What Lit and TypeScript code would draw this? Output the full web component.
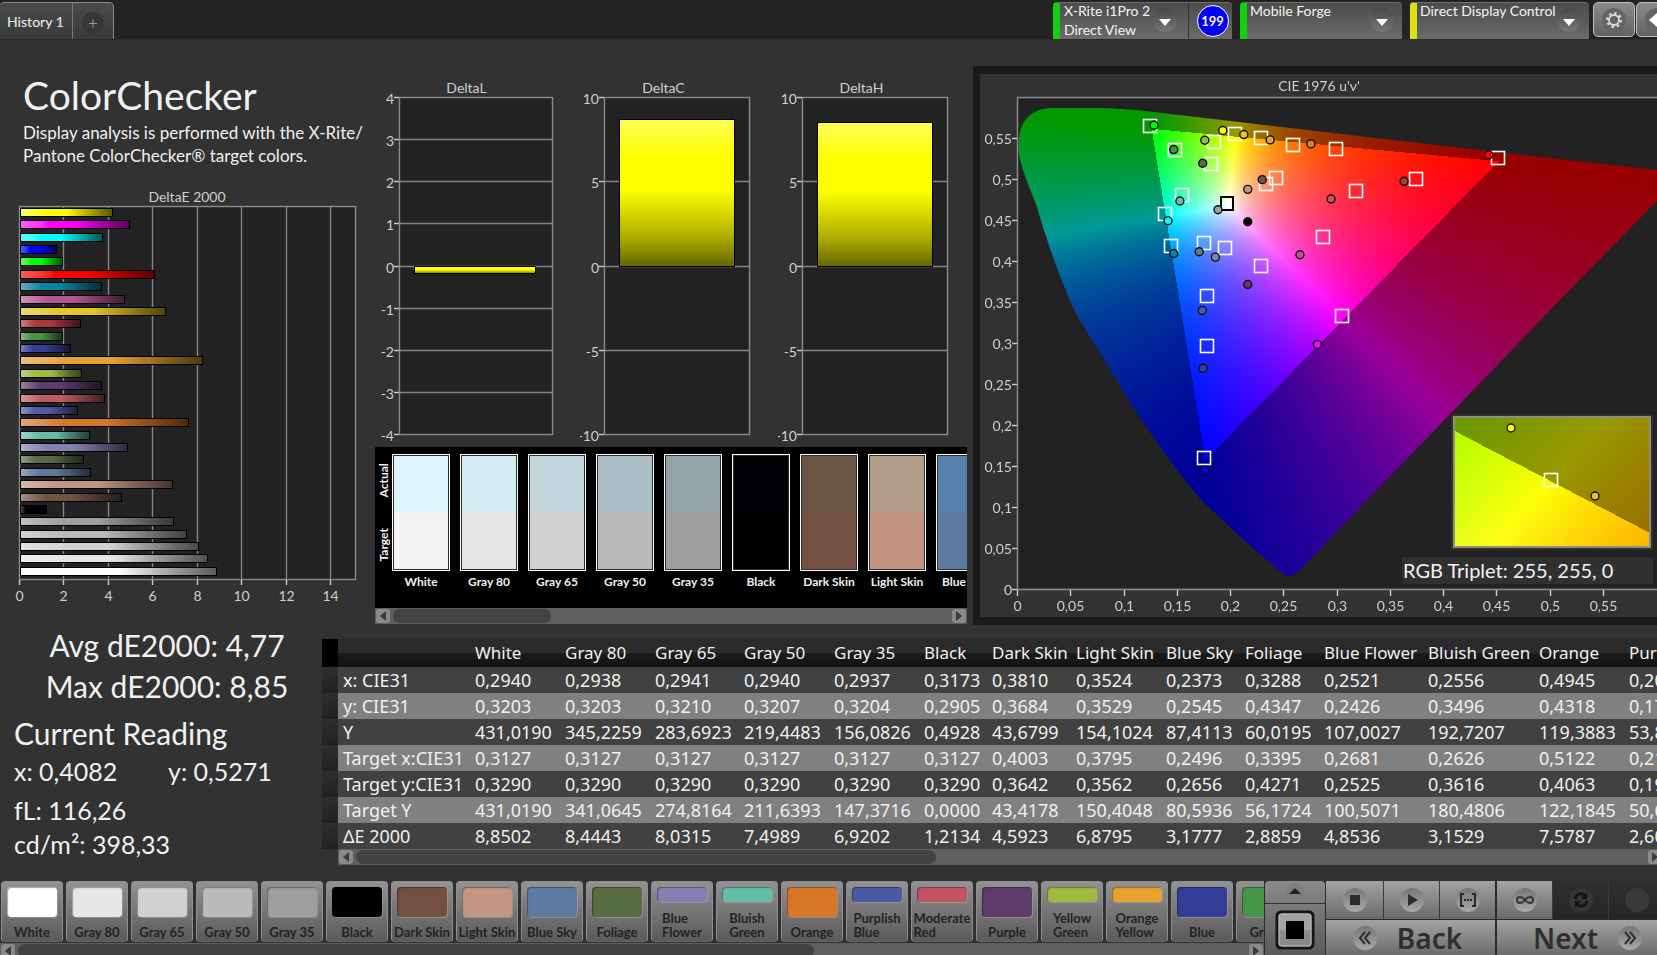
import { LitElement, html, svg, css, nothing } from "lit";
import { customElement, property } from "lit/decorators.js";
import { styleMap } from "lit/directives/style-map.js";
import { classMap } from "lit/directives/class-map.js";

const deltaE: Array<[string, number]> = [
  ["#ffff00", 4.16], ["#ff00ff", 4.93], ["#00ffff", 3.75], ["#0000ff", 1.66], ["#00ff00", 1.92],
  ["#ff0000", 6.06], ["#0885a1", 3.68], ["#bb5695", 4.71], ["#e7c71f", 6.55], ["#af363c", 2.74],
  ["#469449", 1.93], ["#383d96", 2.29], ["#e6a22e", 8.22], ["#9dbc40", 2.78], ["#5e3c6c", 3.68],
  ["#c15a63", 3.82], ["#505ba6", 2.6], ["#d97729", 7.58], ["#67bdaa", 3.15], ["#8580b1", 4.85],
  ["#576c43", 2.89], ["#627a9d", 3.18], ["#c29682", 6.88], ["#735244", 4.59], ["#000000", 1.21],
  ["#a0a0a0", 6.92], ["#bababa", 7.5], ["#d2d2d2", 8.03], ["#e6e6e6", 8.44], ["#ffffff", 8.85],
];

const pairs: Array<[string, string, string]> = [
  ["White", "#dcf5ff", "#f3f3f3"], ["Gray 80", "#d3ebf2", "#e6e6e6"], ["Gray 65", "#c3d6de", "#d1d1d1"],
  ["Gray 50", "#acbfc6", "#bababa"], ["Gray 35", "#95a4aa", "#9e9e9e"], ["Black", "#030206", "#000000"],
  ["Dark Skin", "#6a5444", "#73503f"], ["Light Skin", "#b29d8b", "#c29480"], ["Blue Sky", "#5880ab", "#5d7a9f"],
];

const patches: Array<[string, string, boolean?]> = [
  ["White", "#ffffff"], ["Gray 80", "#e6e6e6"], ["Gray 65", "#d1d1d1"], ["Gray 50", "#bababa"],
  ["Gray 35", "#9e9e9e"], ["Black", "#000000"], ["Dark Skin", "#735040"], ["Light Skin", "#c29682"],
  ["Blue Sky", "#5d7b9f"], ["Foliage", "#586c42"], ["Blue Flower", "#8480b1", true],
  ["Bluish Green", "#65bda8", true], ["Orange", "#d97729"], ["Purplish Blue", "#4a5ba6", true],
  ["Moderate Red", "#c35262", true], ["Purple", "#5d3c6b"], ["Yellow Green", "#9ebb3f", true],
  ["Orange Yellow", "#e6a22f", true], ["Blue", "#333d97"], ["Green", "#469549"],
];

const tableHead = ["White", "Gray 80", "Gray 65", "Gray 50", "Gray 35", "Black", "Dark Skin", "Light Skin",
  "Blue Sky", "Foliage", "Blue Flower", "Bluish Green", "Orange", "Purplish Blue"];
const colWidths = [90, 90, 89, 90, 90, 68, 84, 90, 79, 79, 104, 111, 90, 120];
const tableRows: Array<[string, string[]]> = [
  ["x: CIE31", ["0,2940", "0,2938", "0,2941", "0,2940", "0,2937", "0,3173", "0,3810", "0,3524", "0,2373", "0,3288", "0,2521", "0,2556", "0,4945", "0,2013"]],
  ["y: CIE31", ["0,3203", "0,3203", "0,3210", "0,3207", "0,3204", "0,2905", "0,3684", "0,3529", "0,2545", "0,4347", "0,2426", "0,3496", "0,4318", "0,1752"]],
  ["Y", ["431,0190", "345,2259", "283,6923", "219,4483", "156,0826", "0,4928", "43,6799", "154,1024", "87,4113", "60,0195", "107,0027", "192,7207", "119,3883", "53,8124"]],
  ["Target x:CIE31", ["0,3127", "0,3127", "0,3127", "0,3127", "0,3127", "0,3127", "0,4003", "0,3795", "0,2496", "0,3395", "0,2681", "0,2626", "0,5122", "0,2118"]],
  ["Target y:CIE31", ["0,3290", "0,3290", "0,3290", "0,3290", "0,3290", "0,3290", "0,3642", "0,3562", "0,2656", "0,4271", "0,2525", "0,3616", "0,4063", "0,1903"]],
  ["Target Y", ["431,0190", "341,0645", "274,8164", "211,6393", "147,3716", "0,0000", "43,4178", "150,4048", "80,5936", "56,1724", "100,5071", "180,4806", "122,1845", "50,6210"]],
  ["ΔE 2000", ["8,8502", "8,4443", "8,0315", "7,4989", "6,9202", "1,2134", "4,5923", "6,8795", "3,1777", "2,8859", "4,8536", "3,1529", "7,5787", "2,6041"]],
];

/* Target chromaticities, u' v' */
const targets: Array<[number, number]> = [
  [0.1248, 0.5646], [0.1475, 0.5353], [0.1849, 0.545], [0.2038, 0.5548], [0.2289, 0.5499], [0.2589, 0.5414],
  [0.2992, 0.5365], [0.4506, 0.5247], [0.3745, 0.4998], [0.3173, 0.4852], [0.2429, 0.5011], [0.233, 0.4937],
  [0.182, 0.5182], [0.154, 0.4803], [0.1388, 0.4571], [0.1438, 0.418], [0.1754, 0.4217],
  [0.1948, 0.4156], [0.2281, 0.3936], [0.2869, 0.429], [0.1783, 0.3569], [0.305, 0.3325], [0.1783, 0.2958],
  [0.1754, 0.159],
];

/* Measured chromaticities, u' v' and patch colour */
const measured: Array<[number, number, string]> = [
  [0.1281, 0.5662, "#00ff00"], [0.1466, 0.5365, "#469449"], [0.1758, 0.5479, "#9dbc40"],
  [0.1927, 0.5597, "#ffff00"], [0.2124, 0.5548, "#e7c71f"], [0.2371, 0.5483, "#e6a22e"],
  [0.2754, 0.5434, "#d67e2c"], [0.4423, 0.53, "#ff0000"], [0.3629, 0.4978, "#af363c"],
  [0.2943, 0.4762, "#c15a63"], [0.2297, 0.4998, "#735244"], [0.2161, 0.488, "#c29682"],
  [0.1738, 0.5198, "#576c43"], [0.1524, 0.4738, "#67bdaa"], [0.1882, 0.4632, "#a0a0a0"],
  [0.2161, 0.4485, "#000000"], [0.1413, 0.4497, "#00ffff"], [0.1466, 0.4098, "#0885a1"],
  [0.1705, 0.4119, "#627a9d"], [0.1857, 0.4053, "#8580b1"], [0.2161, 0.372, "#5e3c6c"],
  [0.2651, 0.4082, "#bb5695"], [0.1734, 0.3402, "#505ba6"], [0.2815, 0.2987, "#ff00ff"],
  [0.1742, 0.2698, "#383d96"], [0.1758, 0.1456, "#0000ff"],
];

/* Normalised display colour of an xy chromaticity; dimmed outside the sRGB gamut */
function chromaColor(x: number, y: number): [number, number, number] {
  const X = x / y, Z = (1 - x - y) / y;
  const lin = [
    3.2406 * X - 1.5372 - 0.4986 * Z,
    -0.9689 * X + 1.8758 + 0.0415 * Z,
    0.0557 * X - 0.204 + 1.057 * Z,
  ];
  const inside = Math.min(...lin) >= 0;
  const max = Math.max(...lin);
  const k = inside ? 255 : 153;
  return lin.map((c) => (k * Math.max(c, 0)) / max) as [number, number, number];
}

function paint(w: number, h: number, at: (px: number, py: number) => [number, number]): HTMLCanvasElement {
  const c = document.createElement("canvas");
  c.width = w;
  c.height = h;
  const ctx = c.getContext("2d")!;
  const img = ctx.createImageData(w, h);
  for (let j = 0; j < h; j++) {
    for (let i = 0; i < w; i++) {
      const [x, y] = at(i, j);
      const [r, g, b] = y > 0 ? chromaColor(x, y) : [0, 0, 0];
      const o = (j * w + i) * 4;
      img.data[o] = r;
      img.data[o + 1] = g;
      img.data[o + 2] = b;
      img.data[o + 3] = 255;
    }
  }
  ctx.putImageData(img, 0, 0);
  return c;
}

const scrollStyles = css`
  .scroll {
    display: flex;
    align-items: stretch;
    height: 16px;
    gap: 3px;
    background: #5f5f5f;
    box-sizing: border-box;
    padding: 1px;
  }
  .scroll button {
    flex: none;
    width: 14px;
    padding: 0;
    border: 0;
    border-radius: 3px;
    background: #8a8a8a;
    display: grid;
    place-items: center;
  }
  .track { flex: 1; display: flex; }
  .thumb { border-radius: 7px; background: #434343; }
`;

const scrollbar = (percent: number) => html`
  <div class="scroll">
    <button aria-label="Scroll left"><svg width="6" height="10"><path d="M6 0V10L0 5Z" fill="#3a3a3a" /></svg></button>
    <div class="track"><div class="thumb" style=${styleMap({ width: percent + "%" })}></div></div>
    <button aria-label="Scroll right"><svg width="6" height="10"><path d="M0 0V10L6 5Z" fill="#3a3a3a" /></svg></button>
  </div>`;

const chartStyles = css`
  :host { display: block; }
  svg { display: block; }
  text { font: 14px Lato, sans-serif; fill: #cfcfcf; }
  .plot { fill: #222222; stroke: #8c8c8c; stroke-width: 1.4; }
  .grid { stroke: #858585; stroke-width: 1.4; }
  .tick { stroke: #cccccc; stroke-width: 1.4; }
  .mid { text-anchor: middle; }
  .end { text-anchor: end; }
`;

@customElement("delta-e-chart")
class DeltaEChart extends LitElement {
  static styles = chartStyles;
  render() {
    const unit = 22.25, x0 = 20, top = 21, pitch = 12.37;
    return html`<svg width="370" height="420" role="img" aria-label="DeltaE 2000">
      <defs>${deltaE.map(([c], i) => svg`<linearGradient id="g${i}">
        <stop offset="0" stop-color=${`color-mix(in srgb, ${c}, white 35%)`} />
        <stop offset="0.25" stop-color=${c} />
        <stop offset="0.5" stop-color=${c} />
        <stop offset="1" stop-color=${`color-mix(in srgb, ${c}, black 65%)`} />
      </linearGradient>`)}</defs>
      <text class="mid" x="187" y="16">DeltaE 2000</text>
      <rect class="plot" x=${x0 - 0.5} y=${top - 0.5} width="336" height="373" />
      ${[0, 2, 4, 6, 8, 10, 12, 14].map((v) => {
        const x = Math.floor(x0 + v * unit) - 0.5;
        return svg`${v ? svg`<line class="grid" x1=${x} x2=${x} y1="21" y2="393" />` : nothing}
          <line class="tick" x1=${x} x2=${x} y1="394" y2="399" />
          <text class="mid" x=${x} y="415">${v}</text>`;
      })}
      ${deltaE.map(([, v], i) => svg`<rect x=${x0 + 0.5} y=${Math.round(top + 2 + i * pitch) - 0.5} width=${Math.round(v * unit) - 1}
        height="8" fill="url(#g${i})" stroke="#000" />`)}
    </svg>`;
  }
}

@customElement("delta-chart")
class DeltaChart extends LitElement {
  static styles = chartStyles;
  @property() name = "";
  @property({ type: Number }) width = 200;
  @property({ type: Number }) left = 27;
  @property({ type: Number }) plot = 153;
  @property({ type: Number }) axis = 28;
  @property({ type: Number }) max = 4;
  @property({ type: Number }) step = 1;
  @property({ type: Number }) value = 0;
  render() {
    const top = 22.5, h = 337, zero = top + h / 2;
    const ticks: number[] = [];
    for (let v = this.max; v >= -this.max; v -= this.step) ticks.push(v);
    const yOf = (v: number) => Math.floor(zero - (v / this.max) * (h / 2)) + 0.5;
    const y = Math.min(yOf(this.value), yOf(0)), bh = Math.abs(yOf(this.value) - yOf(0));
    return html`<svg width=${this.width} height="372" role="img" aria-label=${this.name}>
      <defs><linearGradient id="bar" x2="0" y2="1">
        <stop offset="0" stop-color="#ffff58" /><stop offset="0.25" stop-color="#ffff00" />
        <stop offset="0.48" stop-color="#ffff00" /><stop offset="0.8" stop-color="#adad00" /><stop offset="1" stop-color="#646400" />
      </linearGradient></defs>
      <text class="mid" x=${this.left + (this.plot - this.axis) / 2} y="18">${this.name}</text>
      <rect class="plot" x=${this.left - 0.5} y=${top} width=${this.plot} height=${h} />
      ${ticks.map((v) => svg`
        ${Math.abs(v) < this.max ? svg`<line class="grid" x1=${this.left} x2=${this.left + this.plot - 1} y1=${yOf(v)} y2=${yOf(v)} />` : nothing}
        <line class="tick" x1=${this.left - 6} x2=${this.left - 1} y1=${yOf(v)} y2=${yOf(v)} />
        <text class="end" x=${this.left - 6} y=${yOf(v) + 6}>${v}</text>`)}
      <rect x=${Math.round(this.left + this.plot * 0.1) - 0.5} y=${y} width=${Math.round(this.plot * 0.79)} height=${bh} fill="url(#bar)" stroke="#000" />
    </svg>`;
  }
}

@customElement("cie-chart")
class CieChart extends LitElement {
  static styles = [chartStyles, css`
    :host {
      position: relative;
      box-sizing: border-box;
      height: 559px;
      border: 8px solid #1a1a1a;
      border-width: 8px 0 8px 7px;
      overflow: hidden;
      background: #323232;
    }
    .scene, .field { position: absolute; left: 0; top: 0; }
    .field { left: 38px; top: 24px; }
    .base { fill: #222222; }
    .target { fill: none; stroke: #fff; stroke-width: 1.6; }
    .white { stroke: #000; stroke-width: 2; }
    .dot { stroke: #111; stroke-width: 1.4; }
    .inset {
      position: absolute;
      right: 6px;
      top: 342px;
      width: 194px;
      height: 128px;
      border: 2px solid #8d8d80;
      outline: 2px solid #303030;
    }
    .inset svg { position: absolute; left: 0; top: 0; }
    .inset canvas { display: block; }
    .triplet {
      position: absolute;
      right: 4px;
      top: 483px;
      width: 251px;
      padding-left: 1px;
      box-sizing: border-box;
      background: #303030;
      color: #f2f2f2;
      font: 20px/27px Lato, sans-serif;
      white-space: nowrap;
    }
  `];

  firstUpdated() {
    const field = this.renderRoot.querySelector<HTMLCanvasElement>(".field")!;
    const ctx = field.getContext("2d")!;
    const locus = new Path2D(
      "M1 56 C-2 24 12 10 35 10 L83 10 Q110 11 127 13 L478 54 L639 72 L700 79 L639 103 L541 203 L280 474 Q271 482 263 474 Q240 455 215 432 L184 403 Q160 375 136 340 Q118 315 105 293 Q78 248 62 223 L52 203 Q32 155 18 106 Q3 70 1 56 Z"
    );
    ctx.clip(locus);
    const bitmap = paint(field.width, field.height, (i, j) => {
      const u = i / 1065.4, v = (491 - j) / 819;
      const d = 6 * u - 16 * v + 12;
      return [(9 * u) / d, (4 * v) / d];
    });
    ctx.drawImage(bitmap, 0, 0);
    const zoom = this.renderRoot.querySelector<HTMLCanvasElement>(".detail")!;
    const detail = paint(zoom.width, zoom.height, (i, j) => [0.4193 + (i - 96) / 3800, 0.5053 - (j - 63) / 2500]);
    zoom.getContext("2d")!.drawImage(detail, 0, 0);
  }

  render() {
    const px = (u: number) => 37.5 + u * 1065.4;
    const py = (v: number) => 515.5 - v * 820;
    const steps = Array.from({ length: 12 }, (_, i) => i);
    const label = (i: number) => String((i * 5) / 100).replace(".", ",");
    return html`
      <svg class="scene" width="2000" height="543">
        <rect class="base" x="38" y="24" width="1962" height="490" />
      </svg>
      <canvas class="field" width="700" height="490"></canvas>
      <svg class="scene" width="2000" height="543" role="img" aria-label="CIE 1976 u'v' chromaticity diagram">
        <path d="M2000 23.500H37.500V515.500H2000" fill="none" stroke="#8a8a8a" stroke-width="1.5" />
        <text class="mid" x="339" y="17">CIE 1976 u'v'</text>
        ${steps.map((i) => {
          const x = Math.floor(px(i * 0.05)) + 0.5, y = Math.floor(py(i * 0.05)) + 0.5;
          return svg`<line class="tick" x1=${x} x2=${x} y1="516" y2="522" /><text class="mid" x=${x} y="537">${label(i)}</text>
            <line class="tick" x1="32" x2="37" y1=${y} y2=${y} /><text class="end" x="32" y=${y + 5}>${label(i)}</text>`;
        })}
        ${targets.map(([u, v]) => svg`<rect class="target" x=${Math.round(px(u)) - 6.5} y=${Math.round(py(v)) - 7.5} width="13" height="13" />`)}
        <rect class="target white" x="241" y="123" width="12" height="13" />
        ${measured.map(([u, v, c]) => svg`<circle class="dot" cx=${px(u)} cy=${py(v)} r="4" fill=${c} />`)}
      </svg>
      <div class="inset">
        <canvas class="detail" width="194" height="128"></canvas>
        <svg width="194" height="128">
          <rect class="target" x="89.500" y="55.500" width="13" height="13" />
          <circle class="dot" cx="56" cy="10" r="4" fill="#ffff00" />
          <circle class="dot" cx="140" cy="78" r="4" fill="#e7c71f" />
        </svg>
      </div>
      <div class="triplet">RGB Triplet: 255, 255, 0</div>`;
  }
}

const knob = (icon: unknown) => html`<svg class="knob" width="24" height="24" viewBox="0 0 24 24">
  <defs><linearGradient id="k" x2="0" y2="1"><stop offset="0" stop-color="#757575" /><stop offset="1" stop-color="#a9a9a9" /></linearGradient></defs>
  <circle cx="12" cy="12" r="12" fill="url(#k)" />${icon}</svg>`;

@customElement("app-root")
class AppRoot extends LitElement {
  static styles = [scrollStyles, css`
    :host {
      display: flex;
      flex-direction: column;
      min-height: 100vh;
      overflow: hidden;
      background: #323232;
      color: #f0f0f0;
      font-family: Lato, "Noto Sans", sans-serif;
    }
    button { font: inherit; color: inherit; cursor: pointer; }
    header {
      display: flex;
      justify-content: space-between;
      height: 40px;
      box-sizing: border-box;
      padding-top: 2px;
      background: #232323;
      border-bottom: 1px solid #2b2b2b;
      white-space: nowrap;
    }
    .tabs { display: flex; height: 37px; border: 1px solid #8a8a8a; border-width: 1px 1px 0 0; border-radius: 4px 5px 0 0; box-sizing: border-box; background: linear-gradient(#4b4b4b, #393939); }
    .tabs button { border: 0; background: none; padding: 0; font-size: 14px; font-weight: 500; color: #e6e6e6; }
    .tabs .history { width: 73px; padding-left: 7px; text-align: left; border-right: 1px solid #777; }
    .tabs .add { width: 40px; display: grid; place-items: center; }
    .devices { display: flex; gap: 8px; margin-right: -21px; }
    .device {
      display: flex;
      height: 37px;
      box-sizing: border-box;
      border-top: 1px solid #707070;
      border-left: 7px solid #10d010;
      border-radius: 4px 4px 0 0;
      background: linear-gradient(#4c4c4c, #6b6b6b);
      font-size: 14px;
      line-height: 19px;
      color: #f4f4f4;
    }
    .device.idle { border-left-color: #dede10; }
    .pick { display: flex; flex: 1; justify-content: space-between; align-items: flex-start; border: 0; padding: 0 8px 0 3px; background: none; text-align: left; line-height: 19px; }
    .pick span { margin-top: -2px; }
    .pick svg { margin-top: 4px; flex: none; }
    .meter { width: 179px; }
    .meter .pick { padding-right: 11px; padding-left: 4px; }
    .forge { width: 162px; }
    .display { width: 179px; }
    .count { width: 44px; border-left: 1px solid #333; display: grid; place-items: center; padding-left: 4px; box-sizing: border-box; }
    .count span { width: 30px; height: 30px; border-radius: 50%; border: 1px solid #fff; background: #0000f5; font-size: 13px; font-weight: 700; line-height: 30px; text-align: center; }
    .tools { display: flex; gap: 1px; margin-left: -4px; }
    .tools button { width: 42px; height: 35px; padding: 0; border: 1px solid #c0c0c0; border-radius: 5px; background: linear-gradient(#8a8a8a, #626262); display: grid; place-items: center; }

    .upper { display: flex; height: 599px; }
    .summary { width: 372px; flex: none; padding-top: 31px; box-sizing: border-box; }
    h1 { margin: 0 0 2px 23px; font-size: 39px; line-height: 48px; font-weight: 400; }
    .summary p { margin: 0 0 19px 23px; font-size: 17px; line-height: 23px; width: 345px; white-space: nowrap; }
    .center { width: 601px; flex: none; }
    .deltas { display: flex; padding-top: 35px; }
    .compare { margin-left: 3px; width: 592px; background: #000; }
    .strip { display: flex; height: 161px; padding-top: 7px; box-sizing: border-box; overflow: hidden; }
    .sides { display: flex; flex-direction: column; gap: 10px; flex: none; width: 17px; height: 117px; font-size: 12px; font-weight: 700; }
    .sides span { flex: 1; writing-mode: vertical-rl; transform: rotate(180deg); text-align: center; line-height: 17px; }
    .pairs { display: flex; gap: 10px; }
    .pair { flex: none; width: 58px; font-size: 12px; font-weight: 700; line-height: 21px; text-align: center; white-space: nowrap; }
    .chip { display: flex; flex-direction: column; height: 117px; box-sizing: border-box; border: 1px solid #fff; box-shadow: inset 0 0 0 1px rgba(90, 90, 90, 0.5); }
    .chip div { flex: 1; margin: 0 1px; }
    .chip div:first-child { margin-top: 1px; }
    .chip div:last-child { margin-bottom: 1px; }
    cie-chart { flex: 1; min-width: 0; margin-top: 26px; }

    .lower { display: flex; flex: 1; }
    .readings { width: 322px; flex: none; font-size: 30px; line-height: 41px; white-space: nowrap; }
    .stats { text-align: center; margin-top: -14px; padding-left: 12px; }
    .stats p, .now p, .now h2 { margin: 0; }
    .now { padding-left: 14px; }
    .now h2 { font-size: 30px; font-weight: 400; line-height: 38px; margin-top: 7px; }
    .now p { font-size: 25px; line-height: 34px; }
    .now .xy { display: flex; line-height: 38px; }
    .xy span { width: 158px; }
    .now .lum { margin-top: 3px; }
    .data { flex: 1; min-width: 0; overflow: hidden; }
    .sheet { overflow: hidden; }
    table { border-collapse: collapse; table-layout: fixed; width: 1422px; font-family: "Noto Sans", sans-serif; font-size: 18px; white-space: nowrap; }
    .stub-col { width: 16px; }
    .label-col { width: 132px; }
    th, td { height: 26px; padding: 0 0 0 5px; text-align: left; font-weight: 400; line-height: 20px; box-sizing: border-box; }
    thead th { height: 28px; font-size: 17px; background: linear-gradient(#2b2b2b 50%, #1a1a1a 52%, #131313); }
    thead .stub { background: #000; }
    .stub { background: linear-gradient(#2e2e2e, #212121); padding: 0; }
    tbody tr { background: #414141; }
    tbody tr:nth-child(even) { background: #808080; }
    .data .scroll { margin: 0 -6px 0 16px; }

    footer { display: flex; height: 74px; overflow: hidden; background: #2b2b2b; flex: none; }
    .patches { flex: 1; min-width: 0; overflow: hidden; background: #303030; }
    .row { display: flex; gap: 3px; height: 62px; padding: 0 1px; overflow: hidden; }
    .patch {
      flex: none;
      width: 62px;
      height: 61px;
      box-sizing: border-box;
      padding: 5px 0 0;
      border: 1px solid #8f8f8f;
      border-bottom-color: #666;
      border-radius: 4px;
      background: linear-gradient(#929292, #5a5a5a);
      display: flex;
      flex-direction: column;
      align-items: center;
      justify-content: space-between;
      font-size: 13px;
      font-weight: 700;
      line-height: 14px;
      color: #232323;
    }
    .patch i { width: 50px; height: 30px; border-radius: 4px; box-shadow: inset 1px 1px 1px rgba(0, 0, 0, 0.35), 1px 1px 0 rgba(160, 160, 160, 0.6); }
    .patch.double i { height: 15px; }
    .patch span { display: block; padding-bottom: 2px; white-space: nowrap; text-align: left; }
    .patch.double span { white-space: pre-line; }
    .panel { width: 60px; margin: 0 1px; flex: none; display: flex; flex-direction: column; background: linear-gradient(#8a8a8a, #5a5a5a); border-radius: 4px 4px 0 0; }
    .panel button { border: 0; padding: 0; background: none; display: grid; place-items: center; }
    .panel .up { height: 23px; border-bottom: 1px solid #333; }
    .current { flex: 1; }
    .transport { flex: none; width: 331px; display: grid; grid-template-columns: 58px 56px 57px 56px 56px 56px 14px; grid-template-rows: 38px 36px; row-gap: 1px; overflow: hidden; }
    .transport button { border: 0; border-right: 1px solid #3a3a3a; padding: 0; background: linear-gradient(#a3a3a3, #6a6a6a); display: grid; place-items: center; color: #2f2f2f; }
    .transport .off { background: linear-gradient(#303030, #252525); }
    .off .knob { opacity: 0.15; }
    .transport .nav { display: flex; align-items: center; justify-content: center; gap: 20px; font: 600 28px/36px "Noto Sans", sans-serif; }
    .transport .split { border-right: 2px solid #2b2b2b; }
    .transport .back { grid-column: span 3; padding-right: 6px; }
    .transport .next { grid-column: span 4; }
  `];

  private arrow() {
    return html`<svg width="24" height="28" viewBox="0 0 24 28"><defs><linearGradient id="a" x2="0" y2="1"><stop offset="0" stop-color="#474747" /><stop offset="1" stop-color="#777" /></linearGradient></defs>
      <circle cx="12" cy="13" r="12" fill="url(#a)" /><path d="M6 12H18L12 19Z" fill="#fff" /></svg>`;
  }

  render() {
    return html`
      <header>
        <div class="tabs">
          <button class="history">History 1</button>
          <button class="add" aria-label="Add history"><svg width="26" height="26"><circle cx="13" cy="15" r="11" fill="#373737" /><path d="M9 15.500H17M13 11.500V19.500" stroke="#999" /></svg></button>
        </div>
        <div class="devices">
          <div class="device meter">
            <button class="pick"><span>X-Rite i1Pro 2<br />Direct View</span>${this.arrow()}</button>
            <div class="count"><span>199</span></div>
          </div>
          <div class="device forge"><button class="pick"><span>Mobile Forge</span>${this.arrow()}</button></div>
          <div class="device idle display"><button class="pick"><span>Direct Display Control</span>${this.arrow()}</button></div>
          <div class="tools">
            <button aria-label="Settings"><svg width="26" height="26" viewBox="0 0 26 26"><circle cx="13" cy="13" r="12" fill="#646464" />
              <circle cx="13" cy="13" r="5" fill="none" stroke="#ddd" stroke-width="1.8" /><circle cx="13" cy="13" r="6.800" fill="none" stroke="#ddd" stroke-width="2.4" stroke-dasharray="2.400 2.940" /></svg></button>
            <button aria-label="Collapse"><svg width="26" height="26" viewBox="0 0 26 26"><circle cx="13" cy="13" r="12" fill="#646464" /><path d="M13 6V20L5 13Z" fill="#fff" /></svg></button>
          </div>
        </div>
      </header>

      <section class="upper">
        <div class="summary">
          <h1>ColorChecker</h1>
          <p>Display analysis is performed with the X-Rite/<br />Pantone ColorChecker® target colors.</p>
          <delta-e-chart></delta-e-chart>
        </div>
        <div class="center">
          <div class="deltas">
            <delta-chart name="DeltaL" width="208" left="28" plot="153" axis="20" max="4" step="1" value="-0.17"></delta-chart>
            <delta-chart name="DeltaC" width="198" left="25" plot="145" max="10" step="5" value="8.7"></delta-chart>
            <delta-chart name="DeltaH" width="192" left="25" plot="145" max="10" step="5" value="8.52"></delta-chart>
          </div>
          <div class="compare">
            <div class="strip">
              <div class="sides"><span>Actual</span><span>Target</span></div>
              <div class="pairs">${pairs.map(([name, actual, target]) => html`<div class="pair">
                <div class="chip"><div style=${styleMap({ background: actual })}></div><div style=${styleMap({ background: target })}></div></div>${name}</div>`)}</div>
            </div>
            ${scrollbar(28.5)}
          </div>
        </div>
        <cie-chart></cie-chart>
      </section>

      <section class="lower">
        <div class="readings">
          <div class="stats"><p>Avg dE2000: 4,77</p><p>Max dE2000: 8,85</p></div>
          <div class="now">
            <h2>Current Reading</h2>
            <p class="xy"><span>x: 0,4082</span><span>y: 0,5271</span></p>
            <p class="lum">fL: 116,26</p>
            <p>cd/m²: 398,33</p>
          </div>
        </div>
        <div class="data">
          <div class="sheet">
            <table>
              <colgroup><col class="stub-col" /><col class="label-col" />${colWidths.map((w) => html`<col style=${styleMap({ width: w + "px" })} />`)}</colgroup>
              <thead><tr><th class="stub"></th><th></th>${tableHead.map((h) => html`<th scope="col">${h}</th>`)}</tr></thead>
              <tbody>${tableRows.map(([label, cells]) => html`<tr><td class="stub"></td><th scope="row">${label}</th>${cells.map((c) => html`<td>${c}</td>`)}</tr>`)}</tbody>
            </table>
          </div>
          ${scrollbar(45)}
        </div>
      </section>

      <footer>
        <div class="patches">
          <div class="row">${patches.map(([name, color, double]) => html`<button class=${classMap({ patch: true, double: !!double })}>
            <i style=${styleMap({ background: color })}></i><span>${double ? name.replace(" ", "\n") : name}</span></button>`)}</div>
          ${scrollbar(64.8)}
        </div>
        <div class="panel">
          <button class="up" aria-label="Expand"><svg width="20" height="20"><circle cx="10" cy="10" r="9" fill="#7d7d7d" /><path d="M4 12H16L10 6Z" fill="#222" /></svg></button>
          <button class="current" aria-label="Current patch"><svg width="40" height="40" viewBox="0 0 40 40">
            <defs><linearGradient id="p" x2="0" y2="1"><stop offset="0.5" stop-color="#a2a2a2" /><stop offset="0.52" stop-color="#8a8a8a" /></linearGradient></defs>
            <rect x="2" y="2" width="36" height="36" rx="4" fill="url(#p)" stroke="#151515" stroke-width="3" />
            <rect x="4" y="4" width="32" height="32" rx="3" fill="none" stroke="#bdbdbd" /><rect x="11" y="11" width="18" height="18" fill="#000" /></svg></button>
        </div>
        <div class="transport">
          <button aria-label="Stop">${knob(svg`<rect x="7" y="7" width="10" height="10" fill="#2b2b2b" />`)}</button>
          <button aria-label="Play">${knob(svg`<path d="M8 6V18L18 12Z" fill="#2b2b2b" />`)}</button>
          <button class="split" aria-label="Range">${knob(svg`<path d="M8 6H5V18H8M16 6H19V18H16M8 12H10M11 12H13M14 12H16" fill="none" stroke="#2b2b2b" stroke-width="2" />`)}</button>
          <button aria-label="Continuous">${knob(svg`<path d="M12 12C9 8 4 8 4 12S9 16 12 12S20 8 20 12S15 16 12 12Z" fill="none" stroke="#3a3a3a" stroke-width="2" />`)}</button>
          <button class="off" aria-label="Repeat"><svg width="24" height="24" viewBox="0 0 24 24"><circle cx="12" cy="12" r="12" fill="#363636" />
            <path d="M6 11A6 6 0 0 1 16 7.500M18 13A6 6 0 0 1 8 16.500" fill="none" stroke="#151515" stroke-width="3" /><path d="M18 4V11H12ZM6 20V13H12Z" fill="#151515" /></svg></button>
          <button class="off" aria-label="Record">${knob(nothing)}</button>
          <button class="nav back split">${knob(svg`<path d="M12 6L7 12L12 18M17 6L12 12L17 18" fill="none" stroke="#2f2f2f" stroke-width="2" />`)}Back</button>
          <button class="nav next">Next${knob(svg`<path d="M7 6L12 12L7 18M12 6L17 12L12 18" fill="none" stroke="#2f2f2f" stroke-width="2" />`)}</button>
        </div>
      </footer>`;
  }
}
